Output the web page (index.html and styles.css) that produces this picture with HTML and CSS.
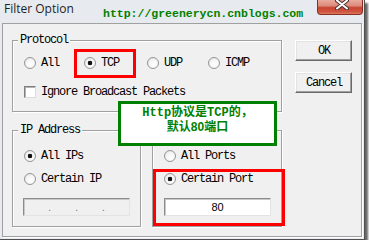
FILE: index.html
```html
<!DOCTYPE html>
<html>
<head>
<meta charset="utf-8">
<link rel="stylesheet" href="styles.css">
</head>
<body>
<div class="window">
  <div class="titlebar">
    <span class="title">Filter Option</span>
    <span class="url">http://greenerycn.cnblogs.com</span>
    <span class="close">
      <svg width="14" height="10" viewBox="0 0 14 10">
        <path d="M2,0.5 L12,8.5 M12,0.5 L2,8.5" stroke="#4a3030" stroke-width="4" stroke-linecap="round"/>
        <path d="M2,0.5 L12,8.5 M12,0.5 L2,8.5" stroke="#ffffff" stroke-width="2" stroke-linecap="round"/>
      </svg>
    </span>
  </div>
  <div class="client">
    <div class="main">
      <fieldset class="group protocol">
        <legend>Protocol</legend>
        <div class="body protocol-body">
          <div class="radio-row">
            <span class="opt c1"><span class="radio"></span>All</span>
            <span class="opt c2"><span class="radio on"></span>TCP</span>
            <span class="opt c3"><span class="radio"></span>UDP</span>
            <span class="opt"><span class="radio"></span>ICMP</span>
          </div>
          <span class="opt check-row"><span class="checkbox"></span>Ignore Broadcast Packets</span>
        </div>
      </fieldset>
      <div class="lower">
        <fieldset class="group ip">
          <legend>IP Address</legend>
          <div class="body sub-body">
            <span class="opt"><span class="radio on"></span>All IPs</span>
            <span class="opt row2"><span class="radio"></span>Certain IP</span>
            <div class="field ipfield"><span></span><i>.</i><span></span><i>.</i><span></span><i>.</i><span></span></div>
          </div>
        </fieldset>
        <fieldset class="group port">
          <legend class="blank"></legend>
          <div class="body sub-body">
            <span class="opt"><span class="radio"></span>All Ports</span>
            <span class="opt row2"><span class="radio on"></span>Certain Port</span>
            <div class="field portfield">80</div>
          </div>
        </fieldset>
      </div>
    </div>
    <div class="buttons">
      <span class="btn">OK</span>
      <span class="btn cancel">Cancel</span>
    </div>
  </div>
  <div class="mark mark-tcp"></div>
  <div class="mark mark-port"></div>
  <div class="callout">
    <div>Http协议是TCP的，</div>
    <div>默认<span class="num">80</span>端口</div>
  </div>
</div>
</body>
</html>
```
FILE: styles.css
```css
html, body {
  margin: 0;
  padding: 0;
  background: #ffffff;
}
.window {
  position: relative;
  width: 364px;
  height: 239px;
  background: #e7ebf0;
  border-right: 1px solid #505050;
  border-bottom: 1px solid #505050;
  box-shadow: 3px 3px 2px rgba(0, 0, 0, 0.6);
  display: flex;
  flex-direction: column;
}
.titlebar {
  height: 23px;
  display: flex;
  align-items: flex-start;
}
.title {
  box-sizing: border-box;
  width: 103px;
  padding-left: 4px;
  margin-top: 1px;
  font: 12px/16px "Open Sans", "Liberation Sans", sans-serif;
  color: #1e1e1e;
}
.url {
  margin-top: 7px;
  font: bold 11.5px/13px "Liberation Mono", monospace;
  color: #008000;
}
.close {
  margin-left: auto;
  margin-right: 1px;
  width: 46px;
  height: 15px;
  box-sizing: border-box;
  border: 1px solid #8a2f25;
  border-top: none;
  border-radius: 0 0 4px 4px;
  background: linear-gradient(#e9aa9c 0%, #dd8c7c 40%, #c94433 55%, #cf5541 85%, #dc7a5e 100%);
  display: flex;
  justify-content: center;
  align-items: flex-start;
}
.close svg {
  display: block;
  margin-left: 3px;
}
.client {
  margin-left: 2px;
  width: 360px;
  height: 214px;
  box-sizing: border-box;
  border: 1px solid #a0a0a0;
  box-shadow: 1px 1px 0 #ffffff;
  background: #f0f0f0;
  padding: 11px 9px 0 9px;
  display: flex;
  gap: 13px;
  font: 12px/12px "Liberation Mono", monospace;
  letter-spacing: -1.2px;
  color: #000;
}
.main {
  width: 270px;
  display: flex;
  flex-direction: column;
}
.group {
  margin: 0;
  padding: 0;
  min-width: 0;
  border: 1px solid #a0a0a0;
  box-shadow: inset 1px 1px 0 #ffffff, 1px 1px 0 #ffffff;
}
.group legend {
  margin-left: 5px;
  padding: 0 2px 0 2px;
  line-height: 11px;
  height: 11px;
  background: #f0f0f0;
}
.group legend.blank {
  padding: 0;
  width: 0;
}
.body {
  display: flex;
  flex-direction: column;
  align-items: flex-start;
}
.protocol-body {
  padding: 11px 0 13px 11px;
}
.radio-row {
  display: flex;
  height: 12px;
}
.opt {
  display: flex;
  align-items: center;
  height: 12px;
  gap: 5px;
  white-space: nowrap;
}
.c1 { width: 60px; }
.c2 { width: 63px; }
.c3 { width: 61px; }
.check-row {
  margin-top: 17px;
}
.radio {
  width: 12px;
  height: 12px;
  box-sizing: border-box;
  border-radius: 50%;
  border: 1px solid #959595;
  background: radial-gradient(circle at 60% 65%, #ffffff 0%, #f4f4f4 55%, #d6d6d6 100%);
  flex: none;
}
.radio.on {
  background:
    radial-gradient(circle, #111 0, #111 2px, rgba(0,0,0,0) 2.6px),
    radial-gradient(circle at 60% 65%, #ffffff 0%, #f4f4f4 55%, #d6d6d6 100%);
}
.checkbox {
  width: 12px;
  height: 12px;
  box-sizing: border-box;
  border: 1px solid;
  border-color: #7f7f7f #dcdcdc #dcdcdc #7f7f7f;
  box-shadow: inset 1px 1px 0 #b4b4b4;
  background: #ffffff;
  flex: none;
}
.lower {
  display: flex;
  gap: 11px;
  margin-top: 13px;
}
.ip { width: 129px; box-sizing: border-box; }
.port { width: 130px; box-sizing: border-box; }
.sub-body {
  padding: 14px 0 10px 11px;
}
.row2 {
  margin-top: 11px;
}
.field {
  margin-top: 13px;
  width: 107px;
  height: 18px;
  box-sizing: border-box;
  border: 1px solid;
  border-color: #8c8c8c #e3e3e3 #e3e3e3 #8c8c8c;
  box-shadow: inset 1px 1px 0 #c8c8c8;
}
.ipfield {
  margin-left: -1px;
  background: #f0f0f0;
  display: flex;
  align-items: flex-end;
  padding: 0 0 2px 0;
}
.ipfield span {
  flex: 1;
}
.ipfield i {
  font-style: normal;
  font: 10px/10px "Liberation Sans", sans-serif;
  color: #707070;
  letter-spacing: 0;
}
.portfield {
  background: #ffffff;
  text-align: center;
  font: 11px/16px "Liberation Sans", sans-serif;
  letter-spacing: 0;
}
.buttons {
  width: 57px;
  padding-top: 5px;
  display: flex;
  flex-direction: column;
  gap: 11px;
}
.btn {
  height: 21px;
  box-sizing: border-box;
  border: 1px solid;
  border-color: #ffffff #6a6a6a #6a6a6a #ffffff;
  box-shadow: inset -1px -1px 0 #a0a0a0, inset 1px 1px 0 #e3e3e3;
  background: #f0f0f0;
  display: flex;
  align-items: center;
  justify-content: center;
  padding-left: 1px;
}
.mark {
  position: absolute;
  box-sizing: border-box;
  border: 3px solid #ff0000;
}
.mark-tcp {
  left: 74px;
  top: 49px;
  width: 62px;
  height: 29px;
}
.mark-port {
  left: 153px;
  top: 169px;
  width: 132px;
  height: 57px;
}
.callout {
  position: absolute;
  left: 118px;
  top: 101px;
  width: 159px;
  height: 45px;
  box-sizing: border-box;
  border: 3px solid #008000;
  background: #ffffff;
  padding-top: 2px;
  text-align: center;
  color: #008000;
  font: bold 12px/14px "Liberation Mono", "Noto Sans CJK SC", monospace;
}
.callout .num {
  font-family: "Liberation Sans", sans-serif;
}
```
